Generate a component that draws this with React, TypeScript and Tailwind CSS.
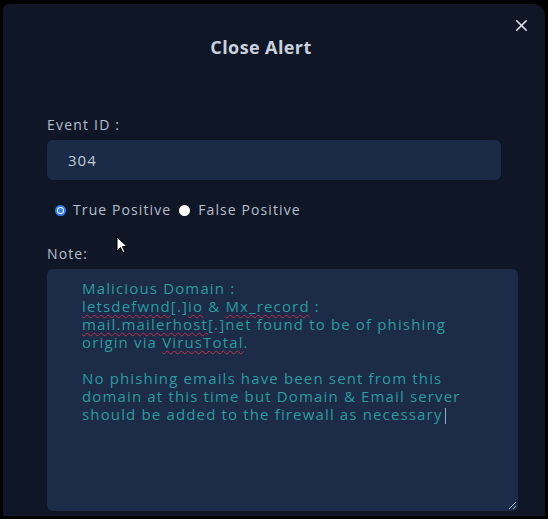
import { X } from 'lucide-react';

const font = { fontFamily: '"Open Sans", "Noto Sans", sans-serif' };

function Misspelled({ children }: { children: string }) {
  return (
    <span className="underline decoration-wavy decoration-[#c0304a] decoration-1 underline-offset-[2px]">
      {children}
    </span>
  );
}

export default function App() {
  return (
    <div className="w-[548px] h-[519px] bg-black pt-[4px] pb-[3px] px-[3px]" style={font}>
      <div className="relative h-full bg-[#0f1727] rounded-tr-[12px] rounded-tl-[6px] flex flex-col">
        {/* Close button */}
        <button className="absolute right-[14px] top-[12px] text-[#e2e6ec]">
          <X size={19} strokeWidth={2} />
        </button>

        <h2 className="text-center text-[18px] font-bold text-[#c9d1dc] mt-[30px] mr-[26px] tracking-[0.4px]">
          Close Alert
        </h2>

        <div className="pl-[44px] pr-[24px] mt-[55px]">
          <div className="text-[14px] text-[#b6bfcb] tracking-[1.2px] leading-[18px]">Event ID :</div>
          <div className="mt-[6px] w-[454px] h-[40px] bg-[#1b2b47] rounded-[6px] flex items-center pl-[21px] text-[15px] text-[#c2cad6] tracking-[1px]">
            304
          </div>

          {/* Verdict radios */}
          <div className="flex items-center mt-[21px] ml-[8px] text-[14px] text-[#b6bfcb] tracking-[1.1px] leading-[18px]">
            <span className="w-[11px] h-[11px] rounded-full border-[2px] border-[#2f7fe8] bg-white flex items-center justify-center">
              <span className="w-[5px] h-[5px] rounded-full bg-[#2f7fe8]" />
            </span>
            <span className="ml-[7px]">True Positive</span>
            <span className="ml-[8px] w-[11px] h-[11px] rounded-full bg-white" />
            <span className="ml-[8px]">False Positive</span>
          </div>

          <div className="mt-[26px] text-[14px] text-[#b6bfcb] tracking-[1.1px] leading-[18px]">Note:</div>

          {/* Note textarea */}
          <div className="relative mt-[6px] w-[471px] h-[242px] bg-[#1b2b48] rounded-[6px] pt-[10px] pl-[35px] text-[15px] leading-[18px] text-[#2b9c9f] tracking-[1.15px] whitespace-nowrap">
            <div>Malicious Domain :</div>
            <div>
              <Misspelled>letsdefwnd</Misspelled>[.]<Misspelled>io</Misspelled> &amp; <Misspelled>Mx_record</Misspelled> :
            </div>
            <div>
              <Misspelled>mail.mailerhost</Misspelled>[.]net found to be of phishing
            </div>
            <div>
              origin via <Misspelled>VirusTotal</Misspelled>.
            </div>
            <div className="h-[18px]" />
            <div>No phishing emails have been sent from this</div>
            <div>domain at this time but Domain &amp; Email server</div>
            <div>
              should be added to the firewall as necessary
              <span className="inline-block w-[1px] h-[16px] bg-[#8fb3d0] align-middle ml-[2px]" />
            </div>

            <svg className="absolute right-[1px] bottom-[1px]" width="9" height="9" viewBox="0 0 9 9">
              <path d="M1 8 L8 1 M5 8 L8 5" stroke="#aeb8c6" strokeWidth="1" />
            </svg>
          </div>
        </div>

        {/* Mouse pointer */}
        <svg className="absolute left-[113px] top-[232px]" width="13" height="19" viewBox="0 0 13 19">
          <path d="M1 1 L1 15 L4.5 11.5 L7 17 L9 16 L6.5 10.5 L11 10.5 Z" fill="#ffffff" stroke="#000000" strokeWidth="1" />
        </svg>
      </div>
    </div>
  );
}
